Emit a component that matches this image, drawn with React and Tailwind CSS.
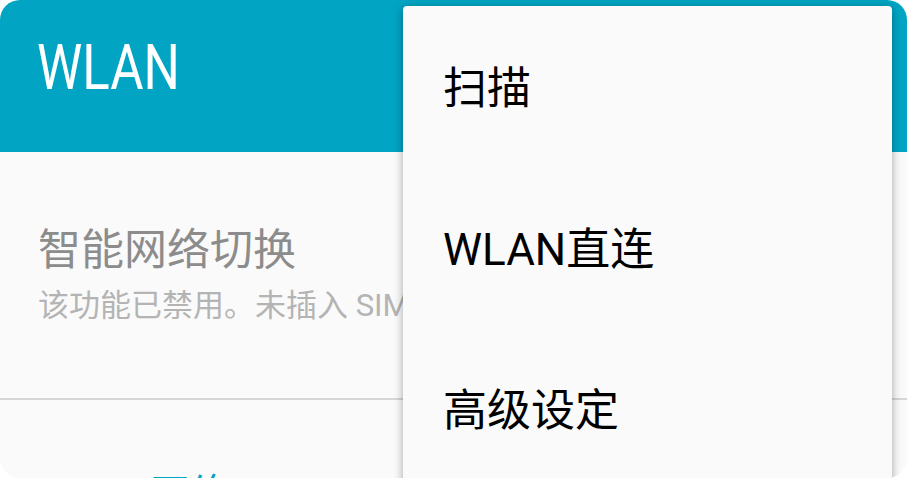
export default function App() {
  const font = { fontFamily: '"Roboto", "Noto Sans CJK SC", sans-serif' };
  return (
    <div className="w-[909px] h-[480px] bg-white" style={font}>
      <div className="relative w-[907px] h-[478px] rounded-[20px] overflow-hidden bg-[#fafafa]">
        <div className="h-[152px] bg-[#01a5c3] pl-[37px] pt-[30px]">
          <div className="text-white text-[63px] leading-[76px] origin-left scale-x-[0.81]">WLAN</div>
        </div>
        <div className="pl-[38px] pt-[70px]">
          <div className="text-[#8c8c8c] text-[43px] leading-[56px] whitespace-nowrap">智能网络切换</div>
          <div className="text-[#b4b4b4] text-[31px] leading-[40px] mt-[8px] whitespace-nowrap">该功能已禁用。未插入 SIM 卡。</div>
        </div>
        <div className="mt-[72px] h-[2px] bg-[#d6d6d6]" />
        <div className="pl-[38px] pt-[70px] text-[#01a5c3] text-[40px] leading-[50px] whitespace-nowrap">WLAN网络</div>
        <div className="absolute left-[403px] top-[6px] w-[489px] h-[500px] bg-[#fafafa] rounded-t-[4px] shadow-[0_2px_10px_rgba(0,0,0,0.35)] pt-[2px]">
          {['扫描', 'WLAN直连', '高级设定'].map((t) => (
            <div key={t} className="h-[161px] flex items-center pl-[40px] text-black text-[44px] whitespace-nowrap">{t}</div>
          ))}
        </div>
      </div>
    </div>
  );
}
